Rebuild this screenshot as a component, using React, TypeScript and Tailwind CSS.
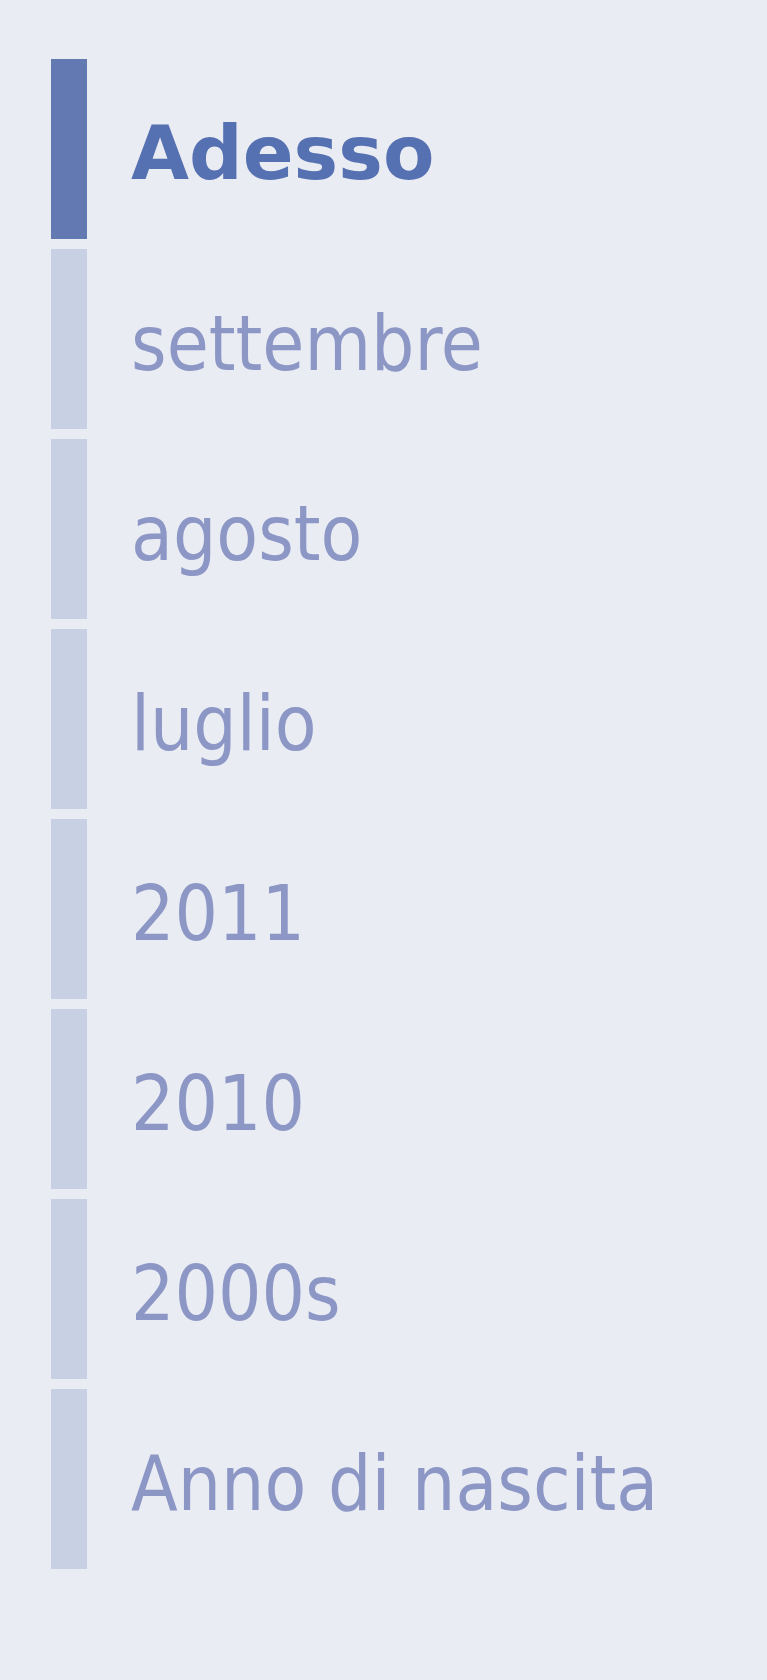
import React from "react";

const items = [
  { label: "Adesso", active: true },
  { label: "settembre" },
  { label: "agosto" },
  { label: "luglio" },
  { label: "2011" },
  { label: "2010" },
  { label: "2000s" },
  { label: "Anno di nascita" },
];

export default function App() {
  return (
    <div className="min-h-[1680px] w-full bg-[#e9ecf3] pt-[59px] pl-[51px] font-['DejaVu_Sans',sans-serif]">
      <ul className="flex flex-col gap-[10px]">
        {items.map((item) => (
          <li key={item.label} className="flex h-[180px] items-stretch">
            <div
              className={
                item.active ? "w-[36px] bg-[#6279b1]" : "w-[36px] bg-[#c7d1e3]"
              }
            />
            {item.active ? (
              <span className="ml-[44px] pt-[57px] text-[75px] leading-none font-bold text-[#5671b2] whitespace-nowrap">
                {item.label}
              </span>
            ) : (
              <span className="ml-[44px] pt-[57px] text-[76px] leading-none text-[#8d97c6] [font-stretch:condensed] whitespace-nowrap">
                {item.label}
              </span>
            )}
          </li>
        ))}
      </ul>
    </div>
  );
}
